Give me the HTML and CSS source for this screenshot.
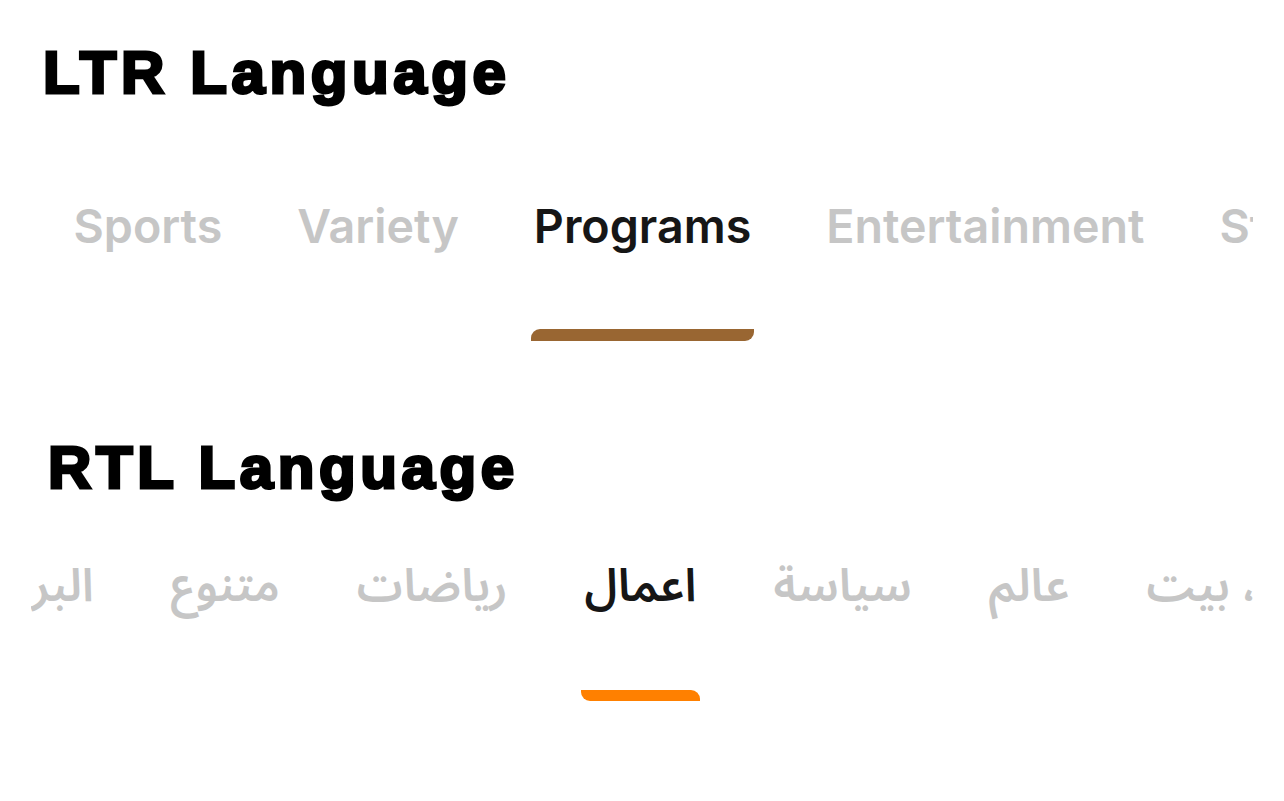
FILE: index.html
```html
<!DOCTYPE html>
<html lang="en">
<head>
<meta charset="utf-8">
<title>Tab bar LTR / RTL</title>
<link rel="stylesheet" href="styles.css">
</head>
<body>
<main class="page">
  <section class="demo demo-ltr">
    <h1 class="title">LTR Language</h1>
    <div class="tabbar">
      <ul class="tabs">
        <li class="tab"><span class="label">Sports</span><span class="indicator"></span></li>
        <li class="tab"><span class="label">Variety</span><span class="indicator"></span></li>
        <li class="tab is-active"><span class="label">Programs</span><span class="indicator"></span></li>
        <li class="tab"><span class="label">Entertainment</span><span class="indicator"></span></li>
        <li class="tab"><span class="label">Stories</span><span class="indicator"></span></li>
      </ul>
    </div>
  </section>

  <section class="demo demo-rtl">
    <h1 class="title title-rtl">RTL Language</h1>
    <div class="tabbar" dir="rtl">
      <ul class="tabs tabs-rtl" lang="ar">
        <li class="tab tab-first"><span class="label">منزل، بيت</span><span class="indicator"></span></li>
        <li class="tab"><span class="label">عالم</span><span class="indicator"></span></li>
        <li class="tab"><span class="label">سياسة</span><span class="indicator"></span></li>
        <li class="tab is-active"><span class="label">اعمال</span><span class="indicator"></span></li>
        <li class="tab"><span class="label">رياضات</span><span class="indicator"></span></li>
        <li class="tab"><span class="label">متنوع</span><span class="indicator"></span></li>
        <li class="tab"><span class="label">البرامج</span><span class="indicator"></span></li>
      </ul>
    </div>
  </section>
</main>
</body>
</html>
```

FILE: styles.css
```css
* { box-sizing: border-box; }

html, body {
  margin: 0;
  padding: 0;
  background: #ffffff;
}

.page {
  width: 1284px;
  height: 801px;
  overflow: hidden;
  padding-top: 38px;
}

.title {
  margin: 0 0 0 43px;
  font-family: "Liberation Sans", Arial, sans-serif;
  font-weight: 700;
  font-size: 60px;
  line-height: 69px;
  color: #000;
  letter-spacing: 4.6px;
  -webkit-text-stroke: 3px #000;
}

.title-rtl {
  margin-left: 48px;
}

.tabbar {
  margin: 91px 31px 0 36px;
  overflow: hidden;
}

.tabs {
  list-style: none;
  margin: 0;
  padding: 0;
  display: flex;
  flex-wrap: nowrap;
}

.tab {
  flex: 0 0 auto;
  display: flex;
  flex-direction: column;
  align-items: stretch;
  padding: 0 37.5px;
}

.label {
  display: block;
  font-family: Inter, "Noto Sans Arabic", "DejaVu Sans", sans-serif;
  font-weight: 600;
  font-size: 46.6px;
  line-height: 56px;
  color: #c6c6c6;
  white-space: nowrap;
  text-align: center;
}

.indicator {
  display: block;
  height: 12px;
  margin: 75px -3px 0;
  visibility: hidden;
}

.is-active .label {
  color: #161616;
}

.demo-ltr .is-active .indicator {
  visibility: visible;
  background: #996632;
  border-radius: 9px 0 9px 0;
}

.demo-rtl {
  margin-top: 92px;
}

.demo-rtl .tabbar {
  margin: 54px 30px 0 31px;
}

.tabs-rtl .tab {
  padding: 0 38.5px;
}

.tabs-rtl .label {
  font-size: 46px;
}

.tabs-rtl .indicator {
  height: 11px;
  margin-top: 78px;
}

.demo-rtl .is-active .indicator {
  visibility: visible;
  background: #ff8000;
  border-radius: 0 9px 0 9px;
}

.tab-first {
  margin-right: -137px;
}
```
